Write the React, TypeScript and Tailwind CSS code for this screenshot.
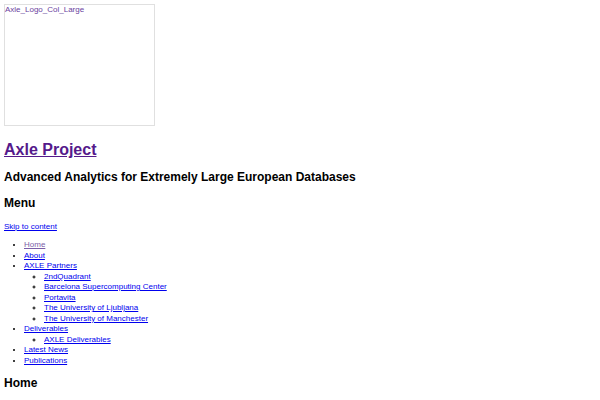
export default function App() {
  const link = "text-[#0000ee] underline";
  return (
    <div className="min-h-[400px] bg-white p-[4px] text-black" style={{ fontFamily: '"Liberation Sans", Arial, sans-serif' }}>
      <div className="w-[151px] h-[122px] border border-[#e0e0e0] text-[8px] leading-[10px] text-[#6b3fa0]">
        Axle_Logo_Col_Large
      </div>
      <h1 className="mt-[13px] text-[16px] leading-[22px] font-bold">
        <a href="#" className="text-[#551a8b] underline">Axle Project</a>
      </h1>
      <h2 className="mt-[9px] text-[12px] leading-[14px] font-bold">
        Advanced Analytics for Extremely Large European Databases
      </h2>
      <h3 className="mt-[12px] text-[12px] leading-[14px] font-bold">Menu</h3>
      <a href="#" className={`block mt-[12px] text-[8px] leading-[10px] ${link}`}>Skip to content</a>
      <ul className="mt-[8px] pl-[20px] list-disc text-[8px] leading-[10.5px]">
        <li><a href="#" className="text-[#7b5ea8] underline">Home</a></li>
        <li><a href="#" className={link}>About</a></li>
        <li>
          <a href="#" className={link}>AXLE Partners</a>
          <ul className="pl-[20px] [list-style-type:circle]">
            <li><a href="#" className={link}>2ndQuadrant</a></li>
            <li><a href="#" className={link}>Barcelona Supercomputing Center</a></li>
            <li><a href="#" className={link}>Portavita</a></li>
            <li><a href="#" className={link}>The University of Ljubljana</a></li>
            <li><a href="#" className={link}>The University of Manchester</a></li>
          </ul>
        </li>
        <li>
          <a href="#" className={link}>Deliverables</a>
          <ul className="pl-[20px] [list-style-type:circle]">
            <li><a href="#" className={link}>AXLE Deliverables</a></li>
          </ul>
        </li>
        <li><a href="#" className={link}>Latest News</a></li>
        <li><a href="#" className={link}>Publications</a></li>
      </ul>
      <h2 className="mt-[10px] text-[12px] leading-[14px] font-bold">Home</h2>
    </div>
  );
}
